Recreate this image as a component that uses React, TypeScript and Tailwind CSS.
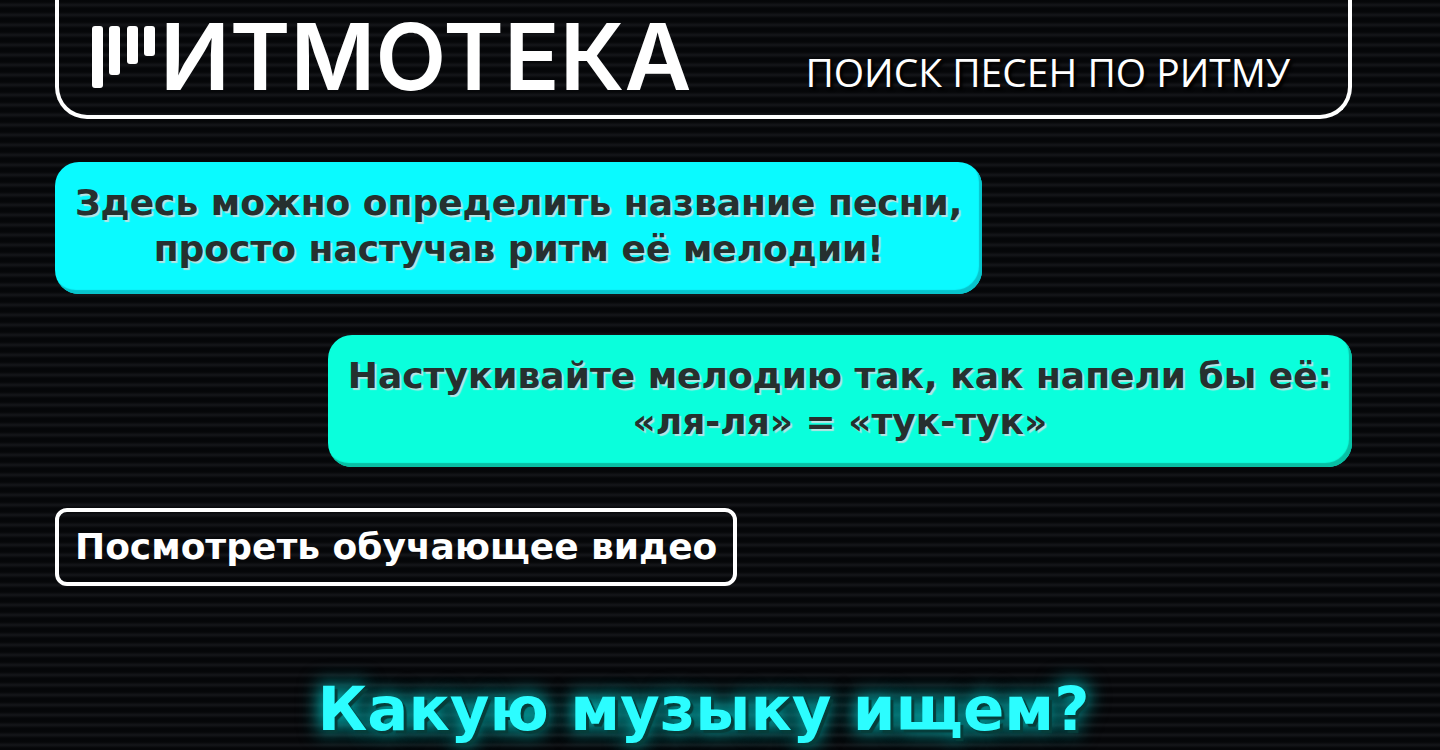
import type { ReactNode } from "react";
import { cva, type VariantProps } from "class-variance-authority";

const bubble = cva(
  "w-fit rounded-[24px] px-5 pt-[18px] pb-[22px] text-center text-[36px] leading-[46px] font-bold text-[#26302f] [text-shadow:2px_2px_1px_#b8e4e4]",
  {
    variants: {
      tone: {
        cyan: "bg-[#0afaff] shadow-[inset_-3px_-4px_1px_#08c4cc]",
        mint: "self-end bg-[#0affdc] shadow-[inset_-3px_-4px_1px_#08bfa4]",
      },
    },
  }
);

function Bubble({ tone, children }: VariantProps<typeof bubble> & { children: ReactNode }) {
  return <p className={bubble({ tone })}>{children}</p>;
}

function LogoBars() {
  return (
    <svg width="64" height="62" viewBox="0 0 64 62" fill="#fff" aria-hidden="true">
      <rect x="0" y="0" width="11" height="62" rx="3" />
      <rect x="17" y="0" width="11" height="49" rx="3" />
      <rect x="35" y="0" width="11" height="38" rx="3" />
      <rect x="52" y="0" width="11" height="30" rx="3" />
    </svg>
  );
}

export default function App() {
  return (
    <div className="min-h-screen overflow-hidden bg-[#050609] bg-[repeating-linear-gradient(to_bottom,#050609_0px,#060709_2px,#15161a_5px,#060709_8px,#050609_10px)] pr-[88px] pl-[55px] font-['DejaVu_Sans',Verdana,sans-serif]">
      <header className="flex items-end justify-between rounded-b-[32px] border-4 border-t-0 border-white pt-[26px] pr-[58px] pb-[27px] pl-[33px]">
        <a href="#" className="flex items-end gap-1 text-white">
          <LogoBars />
          <span className="font-['Inter',sans-serif] text-[92px] leading-[62px] font-semibold">ИТМОТЕКА</span>
        </a>
        <span className="font-['Open_Sans',sans-serif] text-[39px] leading-[32px] font-medium whitespace-nowrap text-white [text-shadow:3px_3px_3px_#000]">
          ПОИСК ПЕСЕН ПО РИТМУ
        </span>
      </header>

      <main className="mt-[43px] flex flex-col gap-[41px]">
        <Bubble tone="cyan">
          Здесь можно определить название песни,
          <br />
          просто настучав ритм её мелодии!
        </Bubble>
        <Bubble tone="mint">
          Настукивайте мелодию так, как напели бы её:
          <br />
          «ля-ля» = «тук-тук»
        </Bubble>
        <button
          type="button"
          className="w-fit cursor-pointer rounded-[12px] border-4 border-white px-4 py-3 text-[36px] leading-[46px] font-bold text-white"
        >
          Посмотреть обучающее видео
        </button>
        <h1 className="mt-[46px] text-center text-[61px] leading-[72px] font-bold text-[#2cfdff] [text-shadow:3px_3px_1px_#063d3a,0_0_18px_#00b8b8,0_0_24px_#007a7a]">
          Какую музыку ищем?
        </h1>
      </main>
    </div>
  );
}
